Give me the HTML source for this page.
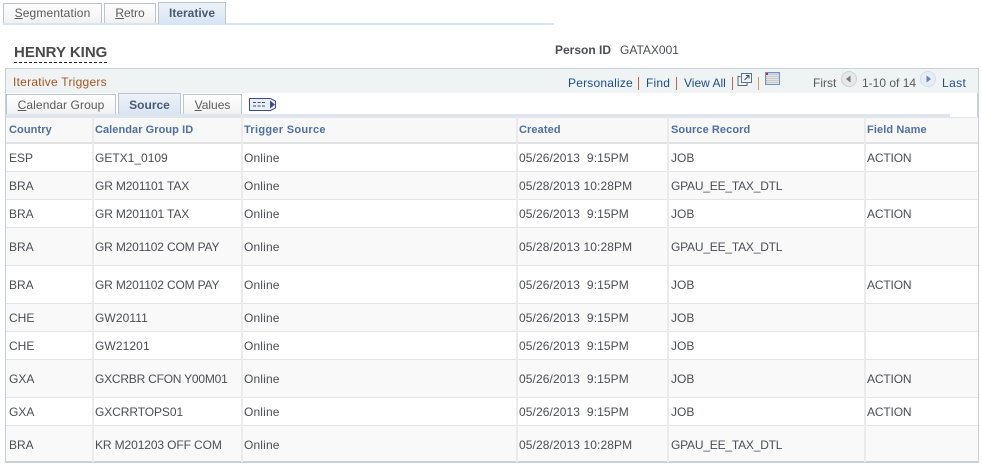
<!DOCTYPE html>
<html>
<head>
<meta charset="utf-8">
<style>
html,body{margin:0;padding:0;background:#fff;}
body{width:982px;height:468px;position:relative;overflow:hidden;font-family:"Liberation Sans",Arial,sans-serif;font-size:12px;color:#4c4e55;}
.a{position:absolute;white-space:nowrap;}
.tab{position:absolute;box-sizing:border-box;border:1px solid #b9c3d2;border-bottom:0;background:linear-gradient(#fff,#f1f1f1);color:#5a5a5a;text-align:center;}
.tab.on{background:linear-gradient(#eef2f8,#d9e5f5);color:#4a5a75;font-weight:bold;}
.tab u{text-decoration:underline;}
.lnk{color:#1f4e8c;}
.sep{position:absolute;width:1px;height:13px;background:#c8604a;}
.hd{position:absolute;top:124px;font-size:11px;font-weight:bold;color:#4f709f;white-space:nowrap;line-height:13px;}
.row{position:absolute;left:6px;width:972px;box-sizing:border-box;border-bottom:1px solid #e4e4e4;}
.vl{position:absolute;top:117px;width:2px;height:345px;background:#ebebeb;}
.c{position:absolute;white-space:nowrap;line-height:14px;color:#4c4e55;}
.o{left:244px;letter-spacing:.15px;}
.d{left:519px;letter-spacing:.1px;}
.j{left:671px;}
.g{left:671px;letter-spacing:-.2px;}
.t{left:867px;letter-spacing:-.15px;}
.n{left:95px;}
</style>
</head>
<body>
<!-- top tabs -->
<div class="a" style="left:3px;top:23px;width:551px;height:2px;background:#dbe5f2;"></div>
<div class="tab" style="left:3px;top:3px;width:99px;height:20px;line-height:19px;letter-spacing:.15px;"><u>S</u>egmentation</div>
<div class="tab" style="left:104px;top:3px;width:52px;height:20px;line-height:19px;"><u>R</u>etro</div>
<div class="tab on" style="left:158px;top:2px;width:68px;height:22px;line-height:21px;">Iterative</div>

<!-- name -->
<div class="a" style="left:14px;top:44px;font-size:15px;font-weight:bold;color:#4a4a4a;line-height:17px;height:18px;border-bottom:1px dashed #222;width:93px;">HENRY KING</div>
<div class="a" style="left:555px;top:43px;font-weight:bold;line-height:14px;">Person ID</div>
<div class="a" style="left:620px;top:43px;line-height:14px;">GATAX001</div>

<!-- grid frame -->
<div class="a" style="left:5px;top:68px;width:974px;height:395px;box-sizing:border-box;border:1px solid #c8d0da;border-width:1px 2px 2px 1px;"></div>
<div class="a" style="left:6px;top:69px;width:972px;height:24px;background:#eff3f4;"></div>
<div class="a" style="left:13px;top:75px;color:#a8541f;line-height:14px;letter-spacing:.25px;">Iterative Triggers</div>

<div class="a lnk" style="left:568px;top:76px;line-height:14px;letter-spacing:.2px;">Personalize</div>
<div class="sep" style="left:638px;top:77px;"></div>
<div class="a lnk" style="left:646px;top:76px;line-height:14px;letter-spacing:.2px;">Find</div>
<div class="sep" style="left:676px;top:77px;"></div>
<div class="a lnk" style="left:684px;top:76px;line-height:14px;">View All</div>
<div class="sep" style="left:732px;top:77px;"></div>
<svg class="a" style="left:737px;top:72px;" width="16" height="15" viewBox="0 0 16 15">
<rect x="4.5" y="1.5" width="10" height="9" fill="#eef3f8" stroke="#5c7391"/>
<path d="M7.5 8 L12 3.5 M9 3.5 H12 V6.5" fill="none" stroke="#3b5578"/>
<path d="M3.5 4.5 H1 V13.5 H10 V11" fill="none" stroke="#666"/>
</svg>
<div class="sep" style="left:758px;top:77px;background:#c8a04a;"></div>
<svg class="a" style="left:765px;top:72px;" width="15" height="13" viewBox="0 0 15 13">
<rect x=".5" y=".5" width="14" height="12" fill="#b4b6bb" stroke="#6f94c4"/>
<path d="M1 3.5H14M1 5.5H14M1 7.5H14M1 9.5H14M1 11.5H14M3 1V12M5 1V12M7 1V12M9 1V12M11 1V12M13 1V12" stroke="#eeeeee" stroke-width=".7"/>
<rect x="1" y="1" width="13" height="1" fill="#c4d4e8"/>
<rect x="1" y="1" width="2" height="2" fill="#d22"/>
</svg>
<div class="a" style="left:813px;top:76px;line-height:14px;color:#5a5a5a;">First</div>
<svg class="a" style="left:841px;top:71px;" width="16" height="16" viewBox="0 0 16 16">
<circle cx="8" cy="8" r="7.5" fill="#e8e8e8" stroke="#cfcfcf"/>
<path d="M5 8 L9.5 4.5 V11.5 Z" fill="#7a7a7a"/>
</svg>
<div class="a" style="left:862px;top:76px;line-height:14px;color:#5a5a5a;">1-10 of 14</div>
<svg class="a" style="left:920px;top:71px;" width="16" height="16" viewBox="0 0 16 16">
<circle cx="8" cy="8" r="7.5" fill="#e6edf6" stroke="#d3dce8"/>
<path d="M11 8 L6.5 4.5 V11.5 Z" fill="#5f82b0"/>
</svg>
<div class="a lnk" style="left:942px;top:76px;line-height:14px;letter-spacing:.4px;">Last</div>

<!-- inner tabs -->
<div class="a" style="left:6px;top:114px;width:944px;height:3px;background:#dde5f0;"></div>
<div class="tab" style="left:6px;top:94px;width:110px;height:20px;line-height:20px;letter-spacing:.1px;"><u>C</u>alendar Group</div>
<div class="tab on" style="left:118px;top:93px;width:63px;height:21px;line-height:22px;">Source</div>
<div class="tab" style="left:183px;top:94px;width:59px;height:20px;line-height:20px;"><u>V</u>alues</div>
<svg class="a" style="left:249px;top:97px;" width="28" height="15" viewBox="0 0 28 15">
<path d="M.5 1.5H21.5L26.5 4V11L21.5 13.5H.5Z" fill="#e9eef8" stroke="#3c4f86"/>
<path d="M4 5.5H7M8.5 5.5H11.5M13 5.5H16M4 9H7M8.5 9H11.5M13 9H16" stroke="#3c4f86"/>
<path d="M21 3.5L26 7.5L21 11.5Z" fill="#3c4f86"/>
</svg>

<!-- header -->
<div class="a" style="left:6px;top:117px;width:972px;height:27px;background:#f8f8f8;border-top:1px solid #e4e4e4;border-bottom:2px solid #e2e2e2;box-sizing:border-box;"></div>

<!-- rows -->
<div class="row" style="top:144px;height:28px;background:#fff;"></div>
<div class="row" style="top:172px;height:28px;background:#f9f9f9;"></div>
<div class="row" style="top:200px;height:28px;background:#fff;"></div>
<div class="row" style="top:228px;height:38px;background:#f9f9f9;"></div>
<div class="row" style="top:266px;height:38px;background:#fff;"></div>
<div class="row" style="top:304px;height:28px;background:#f9f9f9;"></div>
<div class="row" style="top:332px;height:28px;background:#fff;"></div>
<div class="row" style="top:360px;height:38px;background:#f9f9f9;"></div>
<div class="row" style="top:398px;height:28px;background:#fff;"></div>
<div class="row" style="top:426px;height:35px;background:#f9f9f9;border-bottom:0;"></div>

<!-- vertical lines -->
<div class="vl" style="left:92px;"></div>
<div class="vl" style="left:241px;"></div>
<div class="vl" style="left:516px;"></div>
<div class="vl" style="left:667px;"></div>
<div class="vl" style="left:864px;"></div>

<div class="hd" style="left:9px;letter-spacing:.1px;">Country</div>
<div class="hd" style="left:95px;letter-spacing:.06px;">Calendar Group ID</div>
<div class="hd" style="left:244px;letter-spacing:.3px;">Trigger Source</div>
<div class="hd" style="left:519px;letter-spacing:.1px;">Created</div>
<div class="hd" style="left:671px;letter-spacing:.08px;">Source Record</div>
<div class="hd" style="left:867px;letter-spacing:.1px;">Field Name</div>

<!-- row 1 -->
<div class="c" style="left:9px;top:151px;">ESP</div><div class="c n" style="top:151px;">GETX1_0109</div><div class="c o" style="top:151px;">Online</div><div class="c d" style="top:151px;">05/26/2013&nbsp; 9:15PM</div><div class="c j" style="top:151px;">JOB</div><div class="c t" style="top:151px;">ACTION</div>
<!-- row 2 -->
<div class="c" style="left:9px;top:179px;">BRA</div><div class="c n" style="top:179px;letter-spacing:-.14px;">GR M201101 TAX</div><div class="c o" style="top:179px;">Online</div><div class="c d" style="top:179px;">05/28/2013 10:28PM</div><div class="c g" style="top:179px;">GPAU_EE_TAX_DTL</div>
<!-- row 3 -->
<div class="c" style="left:9px;top:207px;">BRA</div><div class="c n" style="top:207px;letter-spacing:-.14px;">GR M201101 TAX</div><div class="c o" style="top:207px;">Online</div><div class="c d" style="top:207px;">05/26/2013&nbsp; 9:15PM</div><div class="c j" style="top:207px;">JOB</div><div class="c t" style="top:207px;">ACTION</div>
<!-- row 4 -->
<div class="c" style="left:9px;top:240px;">BRA</div><div class="c n" style="top:240px;letter-spacing:-.17px;">GR M201102 COM PAY</div><div class="c o" style="top:240px;">Online</div><div class="c d" style="top:240px;">05/28/2013 10:28PM</div><div class="c g" style="top:240px;">GPAU_EE_TAX_DTL</div>
<!-- row 5 -->
<div class="c" style="left:9px;top:278px;">BRA</div><div class="c n" style="top:278px;letter-spacing:-.17px;">GR M201102 COM PAY</div><div class="c o" style="top:278px;">Online</div><div class="c d" style="top:278px;">05/26/2013&nbsp; 9:15PM</div><div class="c j" style="top:278px;">JOB</div><div class="c t" style="top:278px;">ACTION</div>
<!-- row 6 -->
<div class="c" style="left:9px;top:311px;">CHE</div><div class="c n" style="top:311px;letter-spacing:.1px;">GW20111</div><div class="c o" style="top:311px;">Online</div><div class="c d" style="top:311px;">05/26/2013&nbsp; 9:15PM</div><div class="c j" style="top:311px;">JOB</div>
<!-- row 7 -->
<div class="c" style="left:9px;top:339px;">CHE</div><div class="c n" style="top:339px;letter-spacing:.1px;">GW21201</div><div class="c o" style="top:339px;">Online</div><div class="c d" style="top:339px;">05/26/2013&nbsp; 9:15PM</div><div class="c j" style="top:339px;">JOB</div>
<!-- row 8 -->
<div class="c" style="left:9px;top:372px;">GXA</div><div class="c n" style="top:372px;letter-spacing:-.22px;">GXCRBR CFON Y00M01</div><div class="c o" style="top:372px;">Online</div><div class="c d" style="top:372px;">05/26/2013&nbsp; 9:15PM</div><div class="c j" style="top:372px;">JOB</div><div class="c t" style="top:372px;">ACTION</div>
<!-- row 9 -->
<div class="c" style="left:9px;top:405px;">GXA</div><div class="c n" style="top:405px;letter-spacing:-.08px;">GXCRRTOPS01</div><div class="c o" style="top:405px;">Online</div><div class="c d" style="top:405px;">05/26/2013&nbsp; 9:15PM</div><div class="c j" style="top:405px;">JOB</div><div class="c t" style="top:405px;">ACTION</div>
<!-- row 10 -->
<div class="c" style="left:9px;top:438px;">BRA</div><div class="c n" style="top:438px;letter-spacing:-.11px;">KR M201203 OFF COM</div><div class="c o" style="top:438px;">Online</div><div class="c d" style="top:438px;">05/28/2013 10:28PM</div><div class="c g" style="top:438px;">GPAU_EE_TAX_DTL</div>
</body>
</html>
